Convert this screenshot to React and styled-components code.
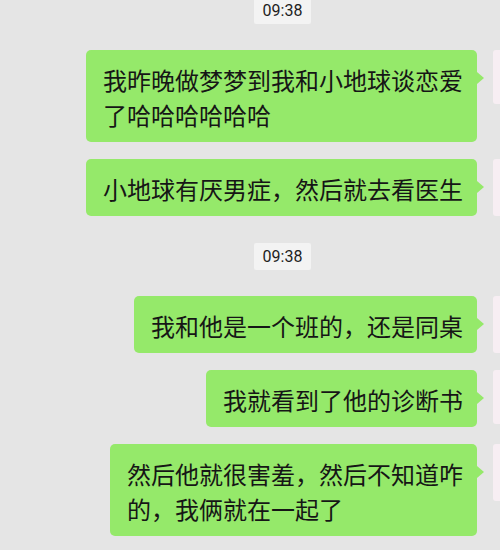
import React from "react";
import styled, { createGlobalStyle } from "styled-components";

const Global = createGlobalStyle`
  html, body {
    margin: 0;
    padding: 0;
    background: #e5e5e5;
  }
  body {
    width: 500px;
    height: 550px;
    overflow: hidden;
  }
`;

const Screen = styled.div`
  width: 500px;
  height: 550px;
  overflow: hidden;
  background-color: #e5e5e5;
  display: flex;
  flex-direction: column;
  gap: 17px;
  font-family: "Noto Sans CJK SC", "Noto Sans", sans-serif;
`;

const TimeRow = styled.div`
  display: flex;
  justify-content: center;
  padding-left: 65px;
  margin: 10px 0 9px;
  &:first-child {
    margin-top: -3px;
  }
`;

const Time = styled.span`
  display: block;
  height: 27px;
  line-height: 28px;
  padding: 0 9px;
  background: #f3f3f3;
  color: #1e1e1e;
  font-family: Roboto, "Liberation Sans", sans-serif;
  font-size: 16px;
  border-radius: 2px;
`;

const Row = styled.div`
  display: flex;
  justify-content: flex-end;
  align-items: flex-start;
  gap: 16px;
`;

const Bubble = styled.div`
  position: relative;
  box-sizing: border-box;
  padding: 12px 14px 10px 17px;
  background: #95e96a;
  border-radius: 5px;
  color: #161616;
  font-size: 24px;
  line-height: 35px;
  white-space: nowrap;

  &::after {
    content: "";
    position: absolute;
    right: -7px;
    top: 22px;
    border-style: solid;
    border-width: 6px 0 6px 7px;
    border-color: transparent transparent transparent #95e96a;
  }
`;

const Line = styled.span`
  display: block;
`;

const Avatar = styled.div`
  flex-shrink: 0;
  width: 55px;
  height: ${(p) => p.$h || 55}px;
  margin-right: -48px;
  background: #f7eef3;
  border-radius: 3px;
`;

const items = [
  { type: "time", text: "09:38" },
  { type: "msg", lines: ["我昨晚做梦梦到我和小地球谈恋爱", "了哈哈哈哈哈哈"], av: 54 },
  { type: "msg", lines: ["小地球有厌男症，然后就去看医生"], av: 57 },
  { type: "time", text: "09:38" },
  { type: "msg", lines: ["我和他是一个班的，还是同桌"], av: 57 },
  { type: "msg", lines: ["我就看到了他的诊断书"], av: 54 },
  { type: "msg", lines: ["然后他就很害羞，然后不知道咋", "的，我俩就在一起了"], av: 57 },
];

export default function App() {
  return (
    <>
      <Global />
      <Screen>
        {items.map((it, i) =>
          it.type === "time" ? (
            <TimeRow key={i}>
              <Time>{it.text}</Time>
            </TimeRow>
          ) : (
            <Row key={i}>
              <Bubble>
                {it.lines.map((l, j) => (
                  <Line key={j}>{l}</Line>
                ))}
              </Bubble>
              <Avatar $h={it.av} />
            </Row>
          )
        )}
      </Screen>
    </>
  );
}
